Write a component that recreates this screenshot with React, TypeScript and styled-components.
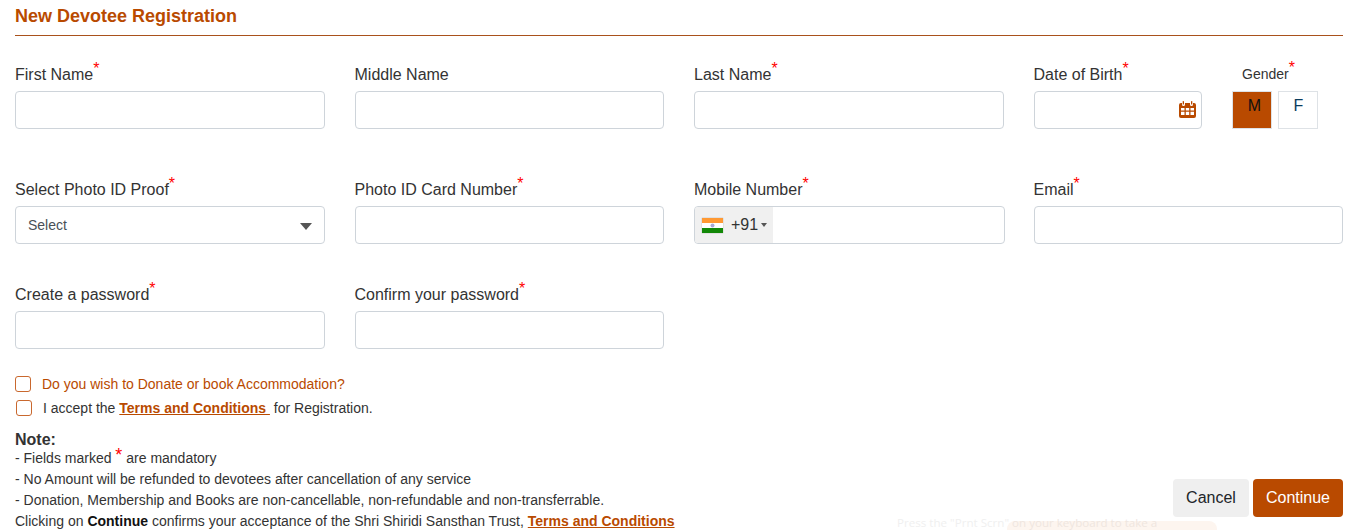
import { ReactNode } from 'react';
import styled, { createGlobalStyle } from 'styled-components';

const brand = '#b94a00';

const GlobalStyle = createGlobalStyle`
    html, body {
        margin: 0;
        padding: 0;
        background: #fff;
    }
    body {
        font-family: 'Liberation Sans', Arial, sans-serif;
        color: #212529;
    }
`;

const Page = styled.div`
    position: relative;
    width: 1352px;
    height: 530px;
    box-sizing: border-box;
    padding: 0 9px 0 15px;
    overflow: hidden;
`;

const Title = styled.h1`
    margin: 0;
    height: 36px;
    box-sizing: border-box;
    padding-top: 6px;
    font-size: 18px;
    line-height: 20px;
    font-weight: 700;
    color: ${brand};
    border-bottom: 1px solid #a9511c;
`;

const Grid = styled.div`
    display: grid;
    grid-template-columns: repeat(4, 309.5px);
    column-gap: 30px;
    grid-template-rows: 115px 105px 105px;
    margin-top: 22px;
`;

const FieldWrap = styled.div`
    display: flex;
    flex-direction: column;
    min-width: 0;
    flex: 1;
`;

const Label = styled.label`
    height: 33px;
    font-size: 16px;
    line-height: 33px;
    white-space: nowrap;
    color: #333;
`;

const RequiredStar = styled.sup`
    position: relative;
    top: -6px;
    color: #f00;
    font-size: 16px;
    line-height: 0;
    vertical-align: baseline;
`;

const Input = styled.input`
    width: 100%;
    height: 38px;
    box-sizing: border-box;
    border: 1px solid #ced4da;
    border-radius: 4px;
    background: #fff;
    outline: none;
`;

const DobRow = styled.div`
    display: flex;
    gap: 30px;
`;

const DateBox = styled.div`
    height: 38px;
    box-sizing: border-box;
    border: 1px solid #ced4da;
    border-radius: 4px;
    display: flex;
    align-items: center;
    justify-content: flex-end;
    padding: 0 5px 2px 0;
`;

const GenderField = styled.div`
    width: 111px;
    flex: none;
`;

const GenderLabel = styled.div`
    height: 33px;
    font-size: 14px;
    line-height: 33px;
    padding-left: 10px;
    color: #333;
`;

const GenderButtons = styled.div`
    display: flex;
    gap: 6px;
`;

const GenderButton = styled.div<{ $active?: boolean }>`
    width: 40px;
    height: 38px;
    box-sizing: border-box;
    border: 1px solid #dee2e6;
    padding-left: ${(p) => (p.$active ? '5px' : '1px')};
    background: ${(p) => (p.$active ? brand : '#fff')};
    color: ${(p) => (p.$active ? '#111' : '#0b3c5d')};
    font-size: 16px;
    line-height: 28px;
    text-align: center;
`;

const SelectBox = styled.div`
    height: 38px;
    box-sizing: border-box;
    border: 1px solid #ced4da;
    border-radius: 4px;
    display: flex;
    align-items: center;
    justify-content: space-between;
    padding: 0 12px;
    font-size: 14px;
    color: #495057;
`;

const SelectArrow = styled.span`
    width: 0;
    height: 0;
    margin-top: 2px;
    border-left: 6px solid transparent;
    border-right: 6px solid transparent;
    border-top: 7px solid #555;
`;

const PhoneBox = styled.div`
    height: 38px;
    width: 311px;
    box-sizing: border-box;
    border: 1px solid #ced4da;
    border-radius: 4px;
    overflow: hidden;
`;

const DialCode = styled.div`
    width: 78px;
    height: 100%;
    box-sizing: border-box;
    background: #f0f0f0;
    display: flex;
    align-items: center;
    padding-left: 7px;
    font-size: 16px;
    color: #333;

    svg {
        box-shadow: 0 0 1px #999;
    }
`;

const DialNumber = styled.span`
    margin-left: 8px;
`;

const DialArrow = styled.i`
    width: 0;
    height: 0;
    margin-left: 3px;
    border-left: 3px solid transparent;
    border-right: 3px solid transparent;
    border-top: 4px solid #555;
`;

const Checks = styled.div`
    margin-top: -8px;
    display: flex;
    flex-direction: column;
    gap: 6px;
    font-size: 14px;
`;

const CheckRow = styled.div<{ $second?: boolean }>`
    display: flex;
    align-items: center;
    height: 18px;
    gap: 10px;
    padding-left: ${(p) => (p.$second ? '1px' : '0')};
    color: #333;
`;

const CheckBox = styled.span`
    width: 16px;
    height: 16px;
    box-sizing: border-box;
    border: 1px solid #c9682e;
    border-radius: 3px;
    flex: none;
`;

const DonateText = styled.span`
    margin-left: 1px;
    color: ${brand};
`;

const AcceptText = styled.span`
    margin-left: 1px;
`;

const TermsLink = styled.a`
    color: ${brand};
    font-weight: 700;
    text-decoration: underline;
`;

const Bottom = styled.div`
    display: flex;
    justify-content: space-between;
    align-items: flex-end;
    margin-top: 13px;
`;

const Notes = styled.div`
    font-size: 14px;
    color: #333;
`;

const NoteTitle = styled.div`
    height: 18px;
    font-size: 16px;
    font-weight: 700;
    line-height: 20px;
`;

const NoteLine = styled.div`
    line-height: 21px;
    white-space: nowrap;

    b {
        color: #111;
    }
`;

const NoteStar = styled.span`
    position: relative;
    top: -2px;
    color: #f00;
    font-size: 18px;
    line-height: 0;
`;

const Actions = styled.div`
    display: flex;
    gap: 4px;
    margin-bottom: 15px;
`;

const ActionButton = styled.button`
    height: 38px;
    border: none;
    border-radius: 4px;
    font-family: inherit;
    font-size: 16px;
`;

const CancelButton = styled(ActionButton)`
    width: 76px;
    background: #efefef;
    color: #212529;
`;

const ContinueButton = styled(ActionButton)`
    width: 90px;
    background: ${brand};
    color: #fff;
`;

const FadedHint = styled.div`
    position: absolute;
    left: 897px;
    top: 515px;
    font-family: 'Open Sans', sans-serif;
    font-size: 11.6px;
    line-height: 15px;
    white-space: nowrap;
    color: #f0f0f0;
`;

const FadedHintOverCard = styled.span`
    color: #efe6df;
`;

const FadedCard = styled.div`
    position: absolute;
    left: 1007px;
    top: 521px;
    width: 210px;
    height: 30px;
    border-radius: 8px;
    background: #fdf5ef;
`;

const Star = () => <RequiredStar>*</RequiredStar>;

const Field = ({ label, required = true, children }: { label: string; required?: boolean; children?: ReactNode }) => (
    <FieldWrap>
        <Label>
            {label}
            {required && <Star />}
        </Label>
        {children ?? <Input type='text' />}
    </FieldWrap>
);

const CalendarIcon = () => (
    <svg width='17' height='18' viewBox='0 0 17 18'>
        <path
            fill={brand}
            fillRule='evenodd'
            d='M2 3h1v1.500a1.500 1.500 0 0 0 3 0V3h5v1.500a1.500 1.500 0 0 0 3 0V3h1a2 2 0 0 1 2 2v11a2 2 0 0 1-2 2H2a2 2 0 0 1-2-2V5a2 2 0 0 1 2-2zM2 8v2.500h3.500V8zm4.800 0v2.500h3.400V8zm4.700 0v2.500H15V8zM2 11.700V15h3.500v-3.300zm4.800 0V15h3.400v-3.300zm4.700 0V15H15v-3.300z'
        />
        <rect x='3.700' y='1' width='1.300' height='3.500' rx='.6' fill={brand} />
        <rect x='12' y='1' width='1.300' height='3.500' rx='.6' fill={brand} />
    </svg>
);

const IndiaFlag = () => (
    <svg width='21' height='15' viewBox='0 0 21 15'>
        <rect width='21' height='5' fill='#f93' />
        <rect y='5' width='21' height='5' fill='#fff' />
        <rect y='10' width='21' height='5' fill='#128807' />
        <circle cx='10.500' cy='7.500' r='2' fill='#a9a9d6' />
    </svg>
);

export default function App() {
    return (
        <Page>
            <GlobalStyle />
            <Title>New Devotee Registration</Title>
            <Grid>
                <Field label='First Name' />
                <Field label='Middle Name' required={false} />
                <Field label='Last Name' />
                <DobRow>
                    <Field label='Date of Birth'>
                        <DateBox>
                            <CalendarIcon />
                        </DateBox>
                    </Field>
                    <GenderField>
                        <GenderLabel>
                            Gender
                            <Star />
                        </GenderLabel>
                        <GenderButtons>
                            <GenderButton $active>M</GenderButton>
                            <GenderButton>F</GenderButton>
                        </GenderButtons>
                    </GenderField>
                </DobRow>

                <Field label='Select Photo ID Proof'>
                    <SelectBox>
                        Select
                        <SelectArrow />
                    </SelectBox>
                </Field>
                <Field label='Photo ID Card Number' />
                <Field label='Mobile Number'>
                    <PhoneBox>
                        <DialCode>
                            <IndiaFlag />
                            <DialNumber>+91</DialNumber>
                            <DialArrow />
                        </DialCode>
                    </PhoneBox>
                </Field>
                <Field label='Email' />

                <Field label='Create a password' />
                <Field label='Confirm your password' />
            </Grid>

            <Checks>
                <CheckRow>
                    <CheckBox />
                    <DonateText>Do you wish to Donate or book Accommodation?</DonateText>
                </CheckRow>
                <CheckRow $second>
                    <CheckBox />
                    <AcceptText>
                        I accept the <TermsLink href='#'>Terms and Conditions&nbsp;</TermsLink> for Registration.
                    </AcceptText>
                </CheckRow>
            </Checks>

            <Bottom>
                <Notes>
                    <NoteTitle>Note:</NoteTitle>
                    <NoteLine>
                        - Fields marked <NoteStar>*</NoteStar> are mandatory
                    </NoteLine>
                    <NoteLine>- No Amount will be refunded to devotees after cancellation of any service</NoteLine>
                    <NoteLine>- Donation, Membership and Books are non-cancellable, non-refundable and non-transferrable.</NoteLine>
                    <NoteLine>
                        Clicking on <b>Continue</b> confirms your acceptance of the Shri Shiridi Sansthan Trust,{' '}
                        <TermsLink href='#'>Terms and Conditions</TermsLink>
                    </NoteLine>
                </Notes>
                <Actions>
                    <CancelButton>Cancel</CancelButton>
                    <ContinueButton>Continue</ContinueButton>
                </Actions>
            </Bottom>

            <FadedCard />
            <FadedHint>
                Press the "Prnt Scrn" <FadedHintOverCard>on your keyboard to take a</FadedHintOverCard>
            </FadedHint>
        </Page>
    );
}
